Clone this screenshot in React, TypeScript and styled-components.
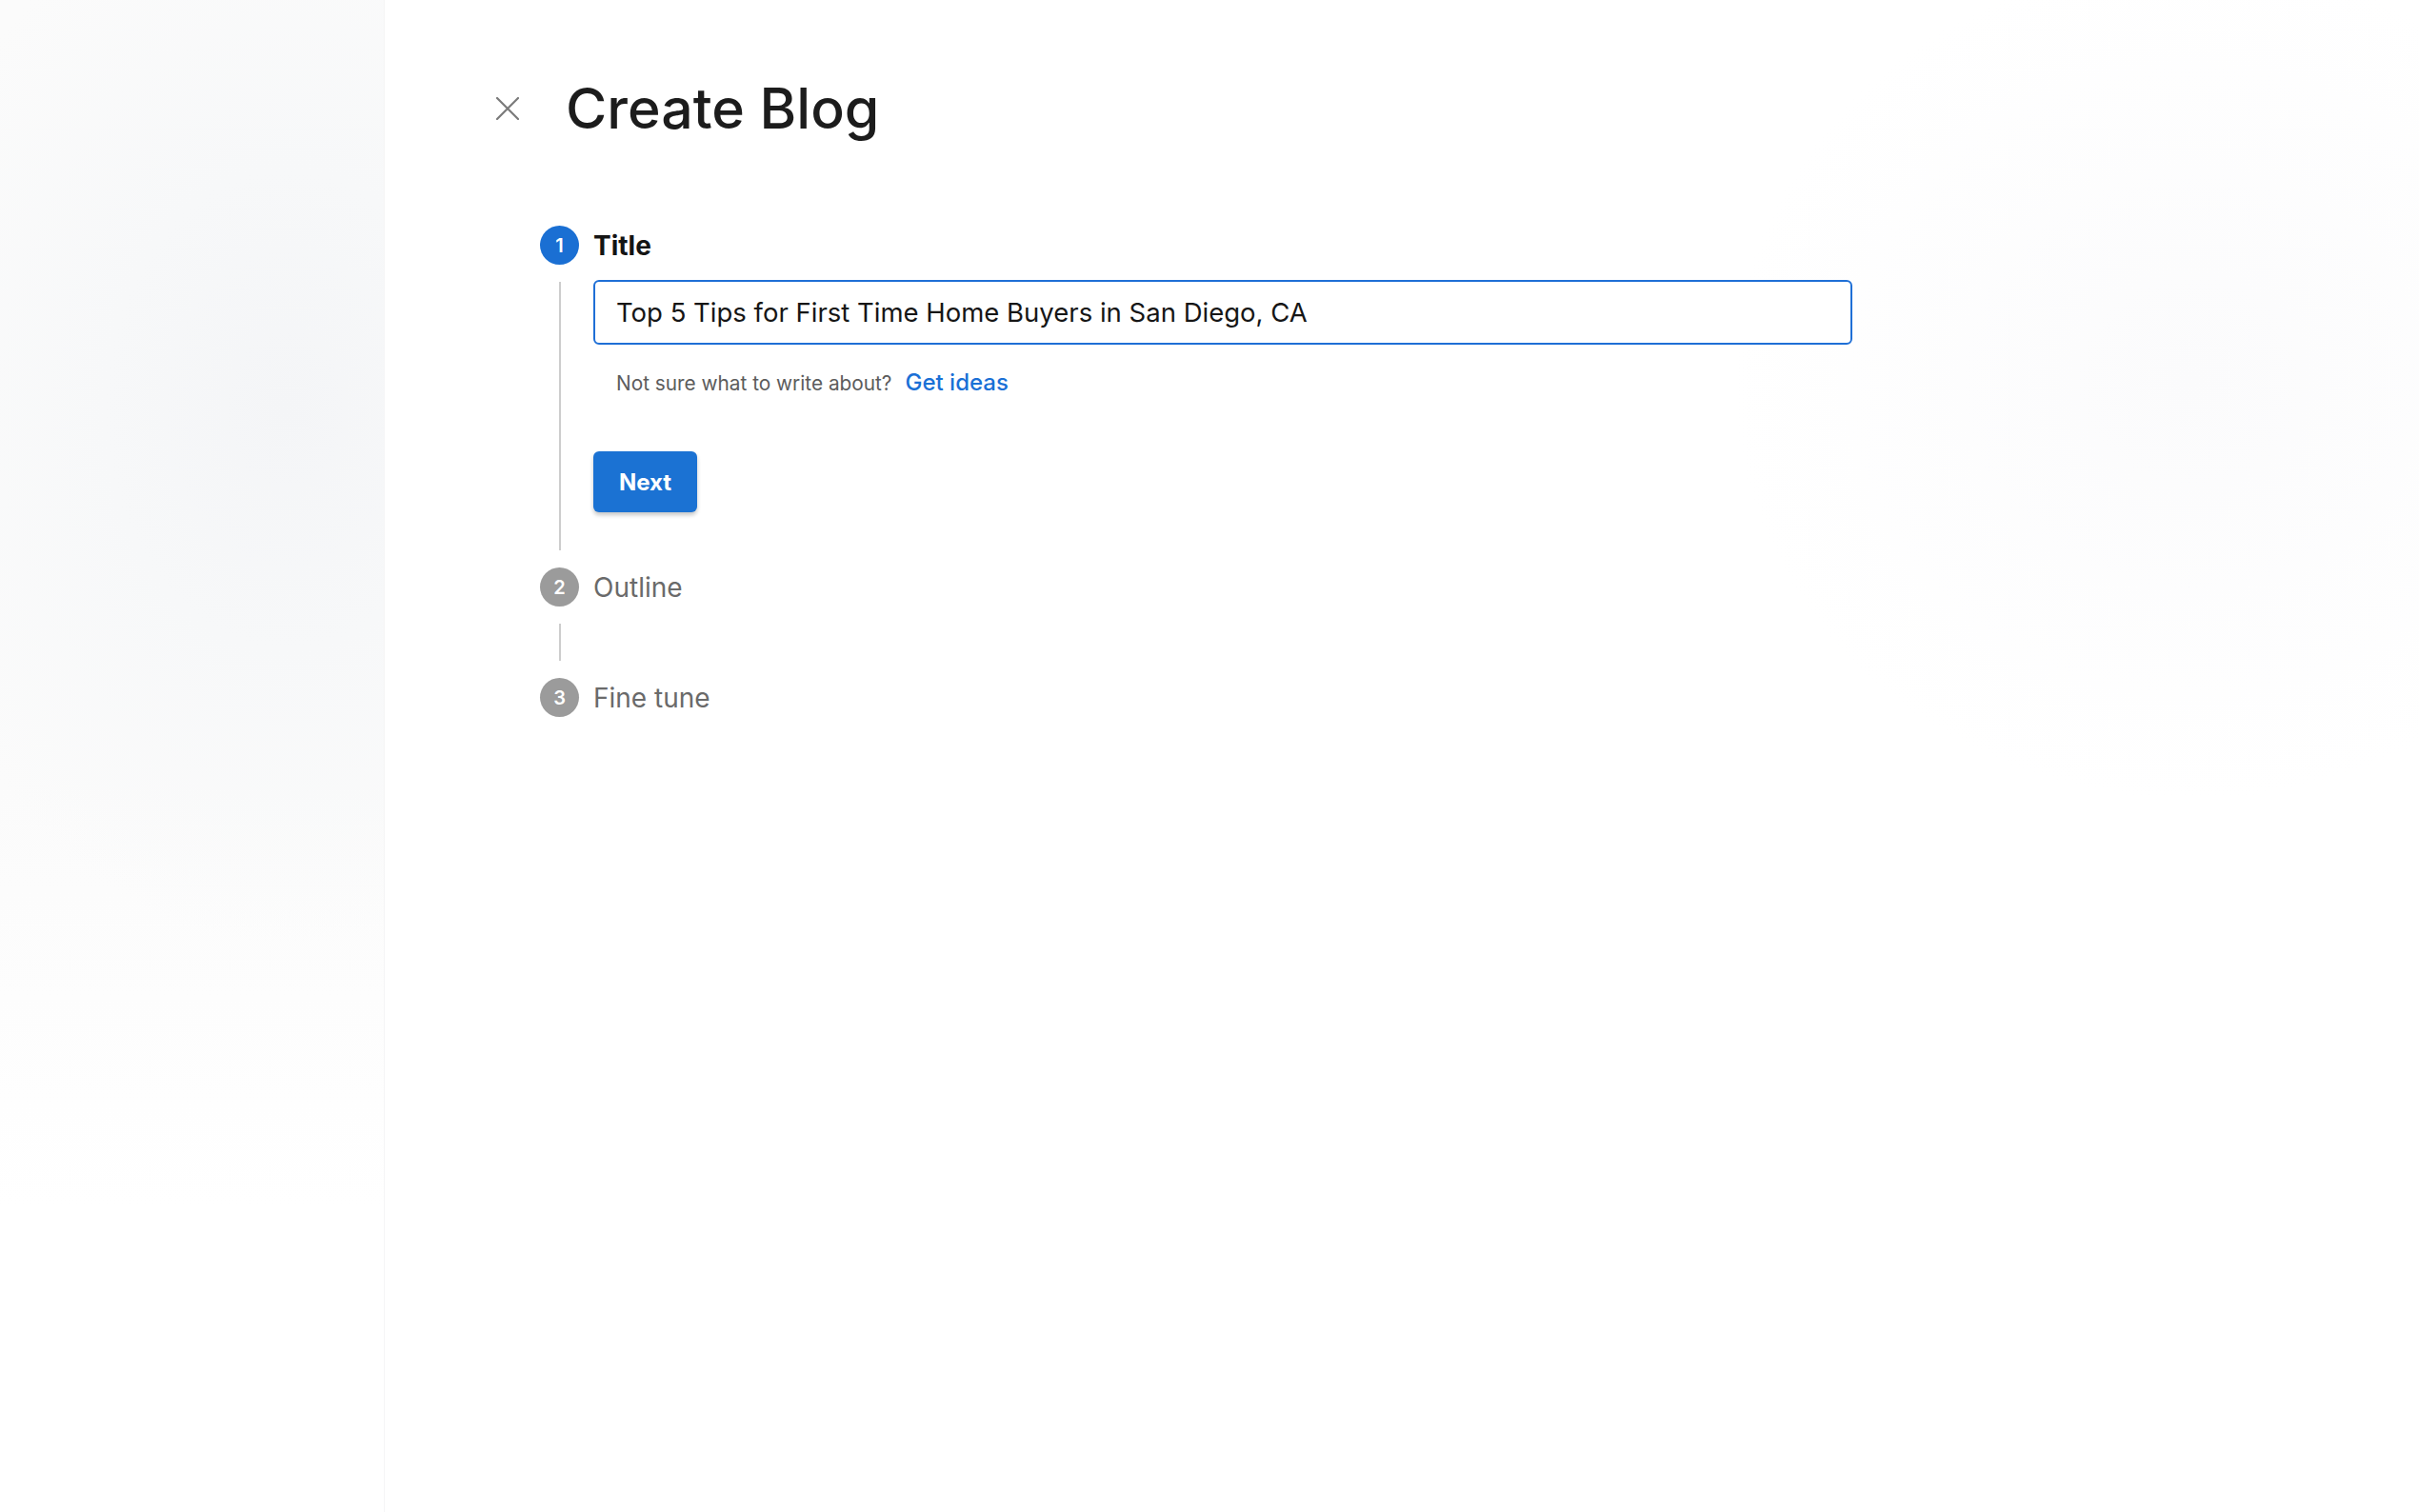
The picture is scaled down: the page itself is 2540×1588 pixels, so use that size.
import * as React from 'react';
import styled, { createGlobalStyle } from 'styled-components';

const GlobalStyle = createGlobalStyle`
  html, body {
    margin: 0;
    padding: 0;
    background: #ffffff;
  }
  body {
    font-family: Inter, "Noto Sans", "Liberation Sans", sans-serif;
    color: #1a1a1a;
  }
  * {
    box-sizing: border-box;
  }
`;

const Page = styled.div`
  display: flex;
  min-height: 100vh;
  background: radial-gradient(ellipse 480px 440px at 2300px 400px, #fbfbfc 0%, #ffffff 100%);
`;

const Sidebar = styled.aside`
  width: 404px;
  flex-shrink: 0;
  background:
    radial-gradient(ellipse 420px 560px at 300px 430px, #f4f5f7 0%, #f7f8f9 45%, rgba(252, 252, 252, 0) 100%),
    linear-gradient(#fbfbfb 0%, #fbfbfb 52%, #fdfdfd 66%, #ffffff 80%);
  border-right: 1px solid #f5f5f6;
`;

const Main = styled.main`
  flex: 1;
  padding: 79px 0 0 117px;
`;

const Header = styled.header`
  display: flex;
  align-items: center;
  gap: 49px;
`;

const CloseButton = styled.button`
  display: flex;
  align-items: center;
  justify-content: center;
  width: 24px;
  height: 24px;
  padding: 0;
  border: none;
  background: none;
  color: #7a7a7a;
  cursor: pointer;
`;

const PageTitle = styled.h1`
  margin: 0;
  font-size: 59px;
  line-height: 70px;
  font-weight: 500;
  color: #1c1c1c;
`;

const Steps = styled.ol`
  list-style: none;
  margin: 88px 0 0 46px;
  padding: 0;
  display: grid;
  grid-template-columns: 41px 1322px;
  column-gap: 15px;
`;

const StepHead = styled.li`
  display: contents;
`;

const Circle = styled.span<{ $active?: boolean }>`
  width: 41px;
  height: 41px;
  border-radius: 50%;
  display: flex;
  align-items: center;
  justify-content: center;
  background: ${p => (p.$active ? '#1a6fd3' : '#9b9b9b')};
  color: #ffffff;
  font-size: 20px;
  font-weight: 600;
`;

const StepLabel = styled.span<{ $active?: boolean }>`
  align-self: center;
  font-size: 28px;
  line-height: 34px;
  font-weight: ${p => (p.$active ? 700 : 400)};
  color: ${p => (p.$active ? '#141414' : '#6a6a6a')};
`;

const Rail = styled.div`
  display: flex;
  justify-content: center;
  padding: 18px 0;
`;

const RailLine = styled.div`
  width: 2px;
  background: #cdcdcd;
`;

const StepBody = styled.div<{ $empty?: boolean }>`
  display: flex;
  flex-direction: column;
  align-items: flex-start;
  padding: ${p => (p.$empty ? '0' : '16px 0 58px')};
  min-height: ${p => (p.$empty ? '75px' : '0')};
`;

const TitleInput = styled.input`
  width: 100%;
  height: 68px;
  padding: 0 22px;
  border: 2px solid #1f6fd6;
  border-radius: 6px;
  outline: none;
  font-family: Inter, "Noto Sans", "Liberation Sans", sans-serif;
  font-size: 27.5px;
  color: #161616;
  caret-color: #161616;
  background: #ffffff;
`;

const Helper = styled.p`
  margin: 26px 0 0 24px;
  display: flex;
  align-items: baseline;
  gap: 14px;
  font-size: 20.8px;
  line-height: 28px;
  color: #5c5c5c;
`;

const IdeasLink = styled.a`
  font-size: 24px;
  font-weight: 500;
  color: #1a70d6;
  text-decoration: none;
  cursor: pointer;
`;

const NextButton = styled.button`
  margin-top: 57px;
  height: 64px;
  padding: 0 27px;
  border: none;
  border-radius: 6px;
  background: #1b72d3;
  color: #ffffff;
  font-family: Inter, "Noto Sans", "Liberation Sans", sans-serif;
  font-size: 24px;
  font-weight: 700;
  box-shadow: 0 3px 4px rgba(0, 0, 0, 0.22);
  cursor: pointer;
`;

type Step = {
  label: string;
};

const steps: Step[] = [{ label: 'Title' }, { label: 'Outline' }, { label: 'Fine tune' }];

const CloseIcon = () => (
  <svg width="24" height="24" viewBox="0 0 24 24" fill="none">
    <path d="M1 1L23 23M23 1L1 23" stroke="currentColor" strokeWidth="2.2" strokeLinecap="round" />
  </svg>
);

export default function App() {
  const [title, setTitle] = React.useState('Top 5 Tips for First Time Home Buyers in San Diego, CA');
  const active = 0;

  return (
    <Page>
      <GlobalStyle />
      <Sidebar />
      <Main>
        <Header>
          <CloseButton aria-label="close">
            <CloseIcon />
          </CloseButton>
          <PageTitle>Create Blog</PageTitle>
        </Header>

        <Steps>
          {steps.map((step, i) => (
            <React.Fragment key={step.label}>
              <StepHead>
                <Circle $active={i === active}>{i + 1}</Circle>
                <StepLabel $active={i === active}>{step.label}</StepLabel>
              </StepHead>
              {i < steps.length - 1 && (
                <>
                  <Rail>
                    <RailLine />
                  </Rail>
                  {i === active ? (
                    <StepBody>
                      <TitleInput value={title} onChange={e => setTitle(e.target.value)} autoFocus />
                      <Helper>
                        Not sure what to write about?
                        <IdeasLink>Get ideas</IdeasLink>
                      </Helper>
                      <NextButton>Next</NextButton>
                    </StepBody>
                  ) : (
                    <StepBody $empty />
                  )}
                </>
              )}
            </React.Fragment>
          ))}
        </Steps>
      </Main>
    </Page>
  );
}
